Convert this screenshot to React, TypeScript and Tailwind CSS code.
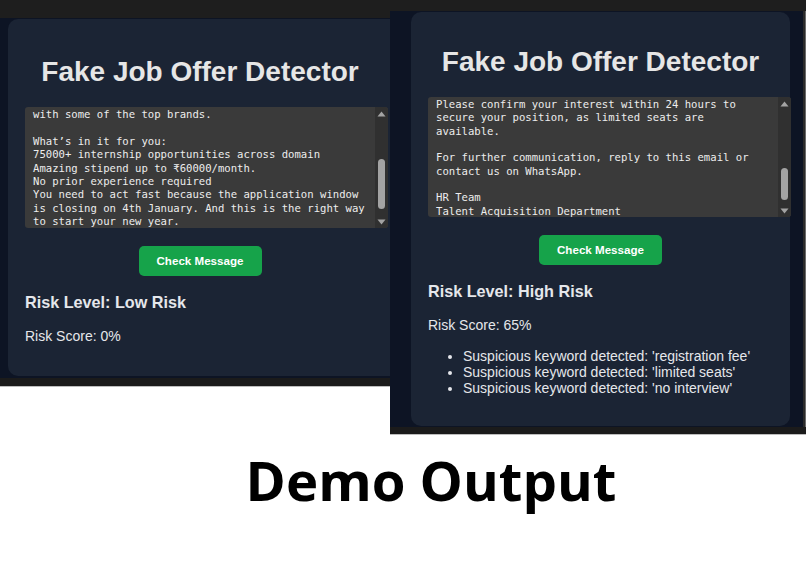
import React from 'react';

type CardProps = {
  padTop: string;
  box: string;
  boxHeight: string;
  lines: string[];
  shift: string;
  thumbTop: string;
  thumbHeight: string;
  level: string;
  score: string;
  reasons?: string[];
};

function Arrow({ up }: { up?: boolean }) {
  return (
    <div className="h-[13px] flex items-center justify-center">
      <svg width="9" height="6" viewBox="0 0 9 6">
        {up ? <path d="M4.5 0.5 L8.5 5.5 L0.5 5.5 Z" fill="#a3a3a3" /> : <path d="M0.5 0.5 L8.5 0.5 L4.5 5.5 Z" fill="#a3a3a3" />}
      </svg>
    </div>
  );
}

function DetectorCard(p: CardProps) {
  return (
    <div className={`${p.box} ${p.padTop} pl-[17px] bg-[#1b2434] rounded-[10px] font-['Liberation_Sans',Arial,sans-serif] text-[#e5e7eb]`}>
      {/* Title */}
      <h1 className="text-[28px] leading-[32px] font-bold text-center text-[#e6e6e6] whitespace-nowrap">
        Fake Job Offer Detector
      </h1>

      {/* Message box with its scrollbar */}
      <div className={`mt-[19px] w-[363px] ${p.boxHeight} bg-[#3a3a3a] rounded-[3px] flex overflow-hidden`}>
        <div className="flex-1 overflow-hidden pl-[8px]">
          <div className={`${p.shift} font-['DejaVu_Sans_Mono',Consolas,monospace] text-[10.6px] leading-[13.33px] text-[#ededed] whitespace-pre`}>
            {p.lines.map((l, i) => (
              <div key={i} className="h-[13.33px]">{l}</div>
            ))}
          </div>
        </div>
        <div className="w-[13px] bg-[#303030] flex flex-col">
          <Arrow up />
          <div className="flex-1 flex justify-center">
            <div className={`${p.thumbTop} ${p.thumbHeight} w-[7px] rounded-full bg-[#a3a3a3]`} />
          </div>
          <Arrow />
        </div>
      </div>

      <div className="mt-[18px] flex justify-center">
        <button className="h-[30px] px-[18px] rounded-[5px] bg-[#16a34a] text-white text-[11.6px] font-bold">
          Check Message
        </button>
      </div>

      <h3 className="mt-[17px] text-[16.2px] leading-[19px] font-bold">Risk Level: {p.level}</h3>
      <p className="mt-[16px] text-[14px] leading-[16px]">Risk Score: {p.score}</p>

      {p.reasons ? (
        <ul className="mt-[15px] pb-[30px] pl-[35px] list-disc text-[14px] leading-[16px]">
          {p.reasons.map(r => (
            <li key={r}>{r}</li>
          ))}
        </ul>
      ) : (
        <div className="h-[32px]" />
      )}
    </div>
  );
}

export default function App() {
  return (
    <div className="w-[806px] h-[570px] bg-white overflow-hidden">
      <div className="flex items-start">
        {/* Left screenshot */}
        <div className="w-[390px] h-[387px] flex flex-col overflow-hidden bg-[#0d1424] border-b border-[#bdbdbd]">
          <div className="h-[18px] bg-[#1e1e1e]" />
          <div className="flex-1 pl-[8px] pt-[1px]">
            <DetectorCard
              padTop="pt-[37px]"
              box="w-[400px] pr-[33px]"
              boxHeight="h-[121px]"
              shift="-mt-[12px]"
              thumbTop="mt-[39px]"
              thumbHeight="h-[50px]"
              level="Low Risk"
              score="0%"
              lines={[
                'Get hands-on experience by working in partnership',
                'with some of the top brands.',
                '',
                'What’s in it for you:',
                '75000+ internship opportunities across domain',
                'Amazing stipend up to ₹60000/month.',
                'No prior experience required',
                'You need to act fast because the application window',
                'is closing on 4th January. And this is the right way',
                'to start your new year.',
              ]}
            />
          </div>
          <div className="h-[8px] bg-[#1b1b1b]" />
        </div>

        {/* Right screenshot */}
        <div className="w-[416px] h-[435px] flex flex-col bg-[#0d1424] border-b border-[#bdbdbd]">
          <div className="h-[11px] bg-[#1e1e1e]" />
          <div className="flex-1 flex">
            <div className="flex-1 pl-[21px] pt-[1px]">
              <DetectorCard
                padTop="pt-[34px]"
                box="w-[379px] pr-[17px]"
                boxHeight="h-[120px]"
                shift="mt-[1px]"
                thumbTop="mt-[58px]"
                thumbHeight="h-[32px]"
                level="High Risk"
                score="65%"
                reasons={[
                  "Suspicious keyword detected: 'registration fee'",
                  "Suspicious keyword detected: 'limited seats'",
                  "Suspicious keyword detected: 'no interview'",
                ]}
                lines={[
                  'Please confirm your interest within 24 hours to',
                  'secure your position, as limited seats are',
                  'available.',
                  '',
                  'For further communication, reply to this email or',
                  'contact us on WhatsApp.',
                  '',
                  'HR Team',
                  'Talent Acquisition Department',
                ]}
              />
            </div>
            <div className="w-[3px] bg-[#2a2a2a] border-r border-[#6b6b6b]" />
          </div>
          <div className="h-[7px] bg-[#1b1b1b]" />
        </div>
      </div>

      <div className="mt-[17px] pl-[56px] flex justify-center">
        <h2 className="font-['Open_Sans',sans-serif] font-bold text-[54.5px] leading-[56px] text-black">Demo Output</h2>
      </div>
    </div>
  );
}
